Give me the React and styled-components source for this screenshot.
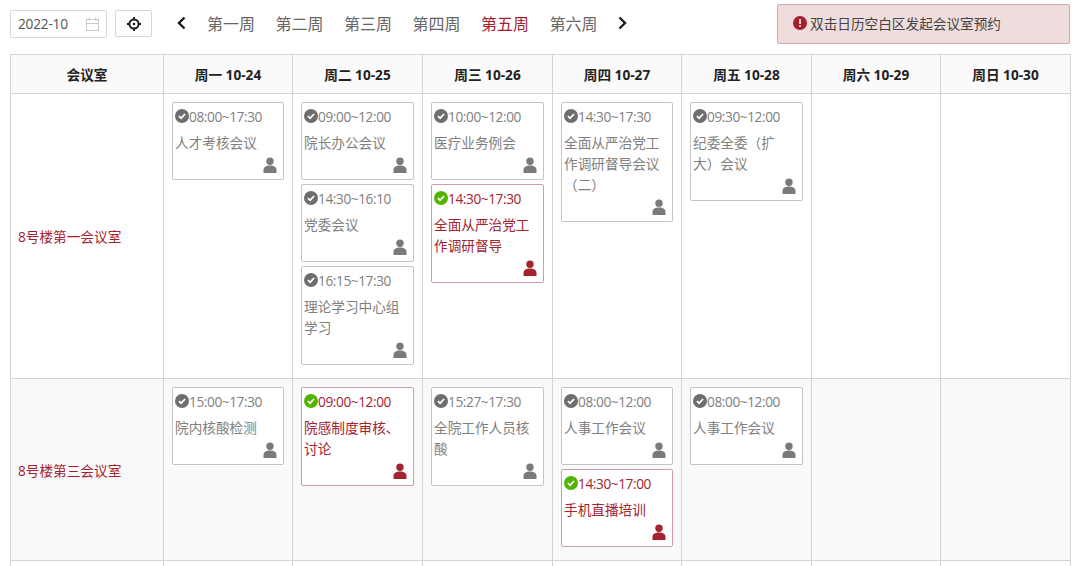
import React from "react";
import styled, { createGlobalStyle } from "styled-components";

const Global = createGlobalStyle`
  html, body { margin: 0; padding: 0; background: #fff; }
  body { width: 1080px; height: 566px; overflow: hidden; font-family: "Open Sans", "Noto Sans CJK SC", sans-serif; font-size: 13.65px; color: #333; text-spacing-trim: space-all; }
`;

const Page = styled.div`
  width: 1080px;
  height: 566px;
  overflow: hidden;
`;

const Toolbar = styled.div`
  height: 54px;
  padding: 0 10px;
  display: flex;
  justify-content: space-between;
  align-items: flex-start;
  box-sizing: border-box;
`;

const LeftTools = styled.div`
  display: flex;
  align-items: center;
  margin-top: 10px;
`;

const DateBox = styled.div`
  width: 97px;
  height: 28px;
  box-sizing: border-box;
  border: 1px solid #d6d6d6;
  border-radius: 2px;
  padding: 0 7px 1px;
  display: flex;
  align-items: center;
  justify-content: space-between;
  color: #555;
  font-size: 13.65px;
  letter-spacing: -0.2px;
`;

const LocateButton = styled.button`
  width: 37px;
  height: 27px;
  margin-left: 8px;
  align-self: flex-start;
  padding: 0;
  background: #fff;
  border: 1px solid #d6d6d6;
  border-radius: 2px;
  display: flex;
  align-items: center;
  justify-content: center;
`;

const Arrow = styled.span`
  display: flex;
  width: 9px;
  margin: ${(p) => (p.$right ? "-2px 0 0 20px" : "-2px 21px 0 25px")};
`;

const WeekList = styled.div`
  display: flex;
  gap: 20.5px;
  margin-top: -3px;
`;

const Week = styled.span`
  font-size: 16px;
  color: ${(p) => (p.$active ? "#a61f2e" : "#666")};
`;

const Alert = styled.div`
  width: 293px;
  height: 40px;
  margin-top: 4px;
  box-sizing: border-box;
  background: #efdddd;
  border: 1px solid #d3a6a8;
  border-radius: 2px;
  padding: 0 15px 2px;
  display: flex;
  align-items: center;
  gap: 3px;
  color: #444;
`;

const Table = styled.table`
  width: 1060px;
  margin-left: 10px;
  table-layout: fixed;
  border-collapse: collapse;
  th, td { border: 1px solid #d4d4d4; }
`;

const HeadCell = styled.th`
  height: 38px;
  padding: 0;
  background: #fafafa;
  color: #222;
  font-weight: 700;
  font-size: 13.65px;
  text-align: center;
`;

const Row = styled.tr`
  background: ${(p) => (p.$striped ? "#f9f9f9" : "#fff")};
`;

const RoomCell = styled.td`
  padding: 0 7px;
  color: #a61f2e;
  vertical-align: middle;
`;

const DayCell = styled.td`
  padding: 8px 8px 9px;
  vertical-align: top;
`;

const BlankCell = styled.td`
  height: 40px;
  padding: 0;
`;

const Card = styled.div`
  box-sizing: border-box;
  background: #fff;
  border: 1px solid ${(p) => (p.$ok ? "#d09ea2" : "#c4c4c4")};
  border-radius: 2px;
  padding: 2px 3px 0 2px;
  margin-bottom: 4px;
  color: ${(p) => (p.$ok ? "#a3232f" : "#808080")};
`;

const TimeLine = styled.div`
  display: flex;
  align-items: center;
  height: 22px;
  font-size: 13.65px;
  letter-spacing: -0.4px;
  white-space: nowrap;
`;

const Title = styled.div`
  margin-top: 5px;
  line-height: 21px;
`;

const Footer = styled.div`
  display: flex;
  justify-content: flex-end;
  height: 26px;
  padding: 4px 3px 0 0;
  box-sizing: border-box;
`;

const Check = ({ ok }) => (
  <svg width="14" height="14" viewBox="0 0 14 14" style={{ flex: "none" }}>
    <circle cx="7" cy="7" r="7" fill={ok ? "#52b300" : "#6e6e6e"} />
    <path d="M3.9 7.1 6.1 9.2 10.1 5" fill="none" stroke="#fff" strokeWidth="1.7" />
  </svg>
);

const Person = ({ color }) => (
  <svg width="14" height="16" viewBox="0 0 14 16">
    <circle cx="7" cy="4.2" r="3.7" fill={color} />
    <path d="M0.5 16V13c0-3 2.4-4.6 6.5-4.6s6.5 1.6 6.5 4.6v3z" fill={color} />
  </svg>
);

const CalendarIcon = () => (
  <svg width="13" height="14" viewBox="0 0 13 14" fill="none" stroke="#c8c8c8">
    <rect x="0.5" y="2.5" width="12" height="11" />
    <path d="M0.5 6.5h12M3.5 0.5v3M9.5 0.5v3" />
  </svg>
);

const TargetIcon = () => (
  <svg width="14" height="14" viewBox="0 0 14 14" fill="none" stroke="#1c1c1c">
    <circle cx="7" cy="7" r="4.6" strokeWidth="2" />
    <circle cx="7" cy="7" r="1.3" fill="#1c1c1c" stroke="none" />
    <path d="M7 0v2.6M7 11.4V14M0 7h2.6M11.4 7H14" strokeWidth="1.8" />
  </svg>
);

const Chevron = ({ right }) => (
  <svg width="9" height="14" viewBox="0 0 9 14" fill="none" stroke="#1c1c1c" strokeWidth="2.4">
    <path d={right ? "M1.5 1.5 7 7l-5.5 5.5" : "M7.5 1.5 2 7l5.5 5.5"} />
  </svg>
);

const InfoIcon = () => (
  <svg width="14" height="14" viewBox="0 0 14 14" style={{ flex: "none" }}>
    <circle cx="7" cy="7" r="7" fill="#a61f2e" />
    <rect x="6.2" y="3" width="1.6" height="5" fill="#fff" />
    <rect x="6.2" y="9.2" width="1.6" height="1.7" fill="#fff" />
  </svg>
);

const Meeting = ({ time, title, ok }) => (
  <Card $ok={ok}>
    <TimeLine>
      <Check ok={ok} />
      {time}
    </TimeLine>
    <Title>{title}</Title>
    <Footer>
      <Person color={ok ? "#a3232f" : "#7a7a7a"} />
    </Footer>
  </Card>
);

const weeks = ["第一周", "第二周", "第三周", "第四周", "第五周", "第六周"];
const heads = ["周一 10-24", "周二 10-25", "周三 10-26", "周四 10-27", "周五 10-28", "周六 10-29", "周日 10-30"];
const colWidths = [153, 129, 130, 130, 129, 130, 129, 130];

const rooms = [
  {
    name: "8号楼第一会议室",
    days: [
      [{ time: "08:00~17:30", title: "人才考核会议" }],
      [
        { time: "09:00~12:00", title: "院长办公会议" },
        { time: "14:30~16:10", title: "党委会议" },
        { time: "16:15~17:30", title: "理论学习中心组学习" },
      ],
      [
        { time: "10:00~12:00", title: "医疗业务例会" },
        { time: "14:30~17:30", title: "全面从严治党工作调研督导", ok: true },
      ],
      [{ time: "14:30~17:30", title: "全面从严治党工作调研督导会议（二）" }],
      [{ time: "09:30~12:00", title: "纪委全委（扩大）会议" }],
      [],
      [],
    ],
  },
  {
    name: "8号楼第三会议室",
    striped: true,
    days: [
      [{ time: "15:00~17:30", title: "院内核酸检测" }],
      [{ time: "09:00~12:00", title: "院感制度审核、讨论", ok: true }],
      [{ time: "15:27~17:30", title: "全院工作人员核酸" }],
      [
        { time: "08:00~12:00", title: "人事工作会议" },
        { time: "14:30~17:00", title: "手机直播培训", ok: true },
      ],
      [{ time: "08:00~12:00", title: "人事工作会议" }],
      [],
      [],
    ],
  },
];

export default function App() {
  return (
    <Page>
      <Global />
      <Toolbar>
        <LeftTools>
          <DateBox>
            2022-10
            <CalendarIcon />
          </DateBox>
          <LocateButton>
            <TargetIcon />
          </LocateButton>
          <Arrow>
            <Chevron />
          </Arrow>
          <WeekList>
            {weeks.map((w, i) => (
              <Week key={w} $active={i === 4}>
                {w}
              </Week>
            ))}
          </WeekList>
          <Arrow $right>
            <Chevron right />
          </Arrow>
        </LeftTools>
        <Alert>
          <InfoIcon />
          双击日历空白区发起会议室预约
        </Alert>
      </Toolbar>
      <Table>
        <colgroup>
          {colWidths.map((w, i) => (
            <col key={i} style={{ width: w }} />
          ))}
        </colgroup>
        <thead>
          <tr>
            <HeadCell>会议室</HeadCell>
            {heads.map((h) => (
              <HeadCell key={h}>{h}</HeadCell>
            ))}
          </tr>
        </thead>
        <tbody>
          {rooms.map((room) => (
            <Row key={room.name} $striped={room.striped}>
              <RoomCell>{room.name}</RoomCell>
              {room.days.map((day, i) => (
                <DayCell key={i}>
                  {day.map((m) => (
                    <Meeting key={m.time} {...m} />
                  ))}
                </DayCell>
              ))}
            </Row>
          ))}
          <Row>
            {colWidths.map((w, i) => (
              <BlankCell key={i} />
            ))}
          </Row>
        </tbody>
      </Table>
    </Page>
  );
}
